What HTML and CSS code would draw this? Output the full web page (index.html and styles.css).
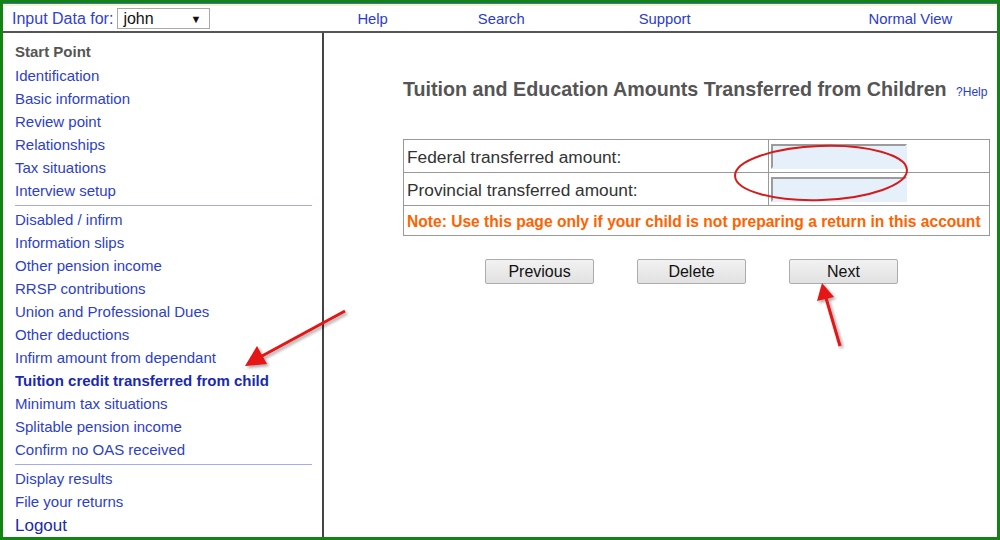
FILE: index.html
```html
<!doctype html>
<html>
<head>
<meta charset="utf-8">
<link rel="stylesheet" href="styles.css">
<title>Tuition and Education Amounts Transferred from Children</title>
</head>
<body>
<div class="frame">
  <div class="topbar">
    <span class="data-for">Input Data for:</span>
    <span class="person-select">john <span class="caret">&#9660;</span></span>
    <a class="nav nav-help" href="#">Help</a>
    <a class="nav nav-search" href="#">Search</a>
    <a class="nav nav-support" href="#">Support</a>
    <a class="nav nav-view" href="#">Normal View</a>
  </div>

  <div class="content">
    <div class="sidebar">
      <div class="side-title">Start Point</div>
      <a href="#">Identification</a>
      <a href="#">Basic information</a>
      <a href="#">Review point</a>
      <a href="#">Relationships</a>
      <a href="#">Tax situations</a>
      <a href="#">Interview setup</a>
      <hr class="side-sep">
      <a href="#">Disabled / infirm</a>
      <a href="#">Information slips</a>
      <a href="#">Other pension income</a>
      <a href="#">RRSP contributions</a>
      <a href="#">Union and Professional Dues</a>
      <a href="#">Other deductions</a>
      <a href="#">Infirm amount from dependant</a>
      <a href="#" class="current">Tuition credit transferred from child</a>
      <a href="#">Minimum tax situations</a>
      <a href="#">Splitable pension income</a>
      <a href="#">Confirm no OAS received</a>
      <hr class="side-sep">
      <a href="#">Display results</a>
      <a href="#">File your returns</a>
      <a href="#" class="logout">Logout</a>
    </div>

    <div class="main">
      <h1>Tuition and Education Amounts Transferred from Children <a class="help" href="#">?Help</a></h1>

      <table class="amounts">
        <tr>
          <td class="label">Federal transferred amount:</td>
          <td class="field"><span class="input"></span></td>
        </tr>
        <tr>
          <td class="label">Provincial transferred amount:</td>
          <td class="field"><span class="input"></span></td>
        </tr>
        <tr>
          <td colspan="2" class="note">Note: Use this page only if your child is not preparing a return in this account</td>
        </tr>
      </table>

      <div class="buttons">
        <button>Previous</button>
        <button>Delete</button>
        <button>Next</button>
      </div>
    </div>
  </div>

  <svg class="marks" width="1000" height="540" viewBox="0 0 1000 540">
    <defs>
      <filter id="shade" x="-20%" y="-20%" width="140%" height="140%">
        <feDropShadow dx="2" dy="2" stdDeviation="1.5" flood-color="#000" flood-opacity="0.35"/>
      </filter>
    </defs>
    <ellipse cx="821" cy="173" rx="86" ry="27" fill="none" stroke="#d41c1c" stroke-width="2" transform="rotate(-2 821 173)"/>
    <g filter="url(#shade)" fill="#e41414" stroke="#e41414">
      <line x1="345" y1="311" x2="262" y2="356" stroke-width="3"/>
      <polygon points="245,366 257,346 267,364" stroke="none"/>
      <line x1="840" y1="346" x2="826" y2="298" stroke-width="3"/>
      <polygon points="822,283 817,301 834,297" stroke="none"/>
    </g>
  </svg>
</div>
</body>
</html>
```

FILE: styles.css
```css
body {
    margin: 0;
    font-family: "Liberation Sans", Arial, sans-serif;
    background-color: white;
}
a {
    color: #2b3bcc;
    text-decoration: none;
}
.frame {
    position: relative;
    width: 1000px;
    height: 540px;
    box-sizing: border-box;
    border: 3px solid #118411;
    display: flex;
    flex-direction: column;
    overflow: hidden;
}

/* top bar */
.topbar {
    flex: none;
    height: 25px;
    border-top: 1px solid #4a6cc4;
    box-shadow: inset 0 2px 0 #fbf4c6;
    border-bottom: 2px solid #555;
    display: flex;
    align-items: center;
    padding-top: 2px;
    font-size: 15px;
}
.data-for {
    color: #3342cc;
    margin-left: 9px;
    font-size: 16px;
}
.person-select {
    width: 78px;
    height: 19px;
    margin-left: 4px;
    border: 1px solid #a9a9a9;
    display: flex;
    align-items: center;
    justify-content: space-between;
    padding: 0 8px 0 5px;
    color: #111;
    font-size: 16px;
}
.caret {
    font-size: 11px;
}
.nav {
    color: #2b3bcc;
    font-size: 14.8px;
}
.nav-help { margin-left: 147px; }
.nav-search { margin-left: 90px; }
.nav-support { margin-left: 114px; }
.nav-view { margin-left: 178px; }

.content {
    flex: 1;
    min-height: 0;
    display: flex;
}

/* sidebar */
.sidebar {
    width: 307px;
    border-right: 2px solid #444;
    padding: 7px 0 0 12px;
    display: flex;
    flex-direction: column;
    font-size: 15px;
    line-height: 23px;
}
.side-title {
    color: #555;
    font-weight: bold;
    line-height: 24px;
}
.sidebar a {
    color: #2e3fc6;
}
.sidebar a.current {
    color: #1a2aae;
    font-weight: bold;
}
.sidebar a.logout {
    color: #1b2aa8;
    font-size: 17px;
    line-height: 25px;
}
.side-sep {
    width: 297px;
    margin: 3px 0 2px 0;
    border: 0;
    border-top: 1px solid #a3aaf2;
}

/* main */
.main {
    flex: 1;
    padding: 44px 7px 0 79px;
}
h1 {
    margin: 0 0 35px 0;
    font-size: 19.7px;
    line-height: 24px;
    color: #555;
}
h1 .help {
    font-size: 12px;
    font-weight: normal;
    margin-left: 4px;
}
.amounts {
    width: 100%;
    border-collapse: collapse;
    border: 1px solid #999;
}
.amounts td {
    border: 1px solid #999;
    height: 30px;
    padding: 2px 3px 0 3px;
}
.label {
    width: 358px;
    font-size: 17.3px;
    color: #333;
}
.amounts td.field {
    padding: 0 0 0 2px;
}
.input {
    display: block;
    width: 132px;
    height: 21px;
    background-color: #e6f0fb;
    border: 2px solid #e6f0fb;
    border-top-color: #9b9b9b;
    border-left-color: #9b9b9b;
}
.amounts td.note {
    height: 27px;
    color: #ff6300;
    font-weight: bold;
    font-size: 15.6px;
}
.buttons {
    margin-top: 23px;
    padding-left: 82px;
    display: flex;
    gap: 43px;
}
.buttons button {
    width: 109px;
    height: 25px;
    font-family: "Liberation Sans", Arial, sans-serif;
    font-size: 16px;
    color: #111;
    background: linear-gradient(#f2f2f2, #e1e1e1);
    border: 1px solid #acacac;
    border-radius: 2px;
    padding: 0;
}

.marks {
    position: absolute;
    left: -3px;
    top: -3px;
    pointer-events: none;
}
```
